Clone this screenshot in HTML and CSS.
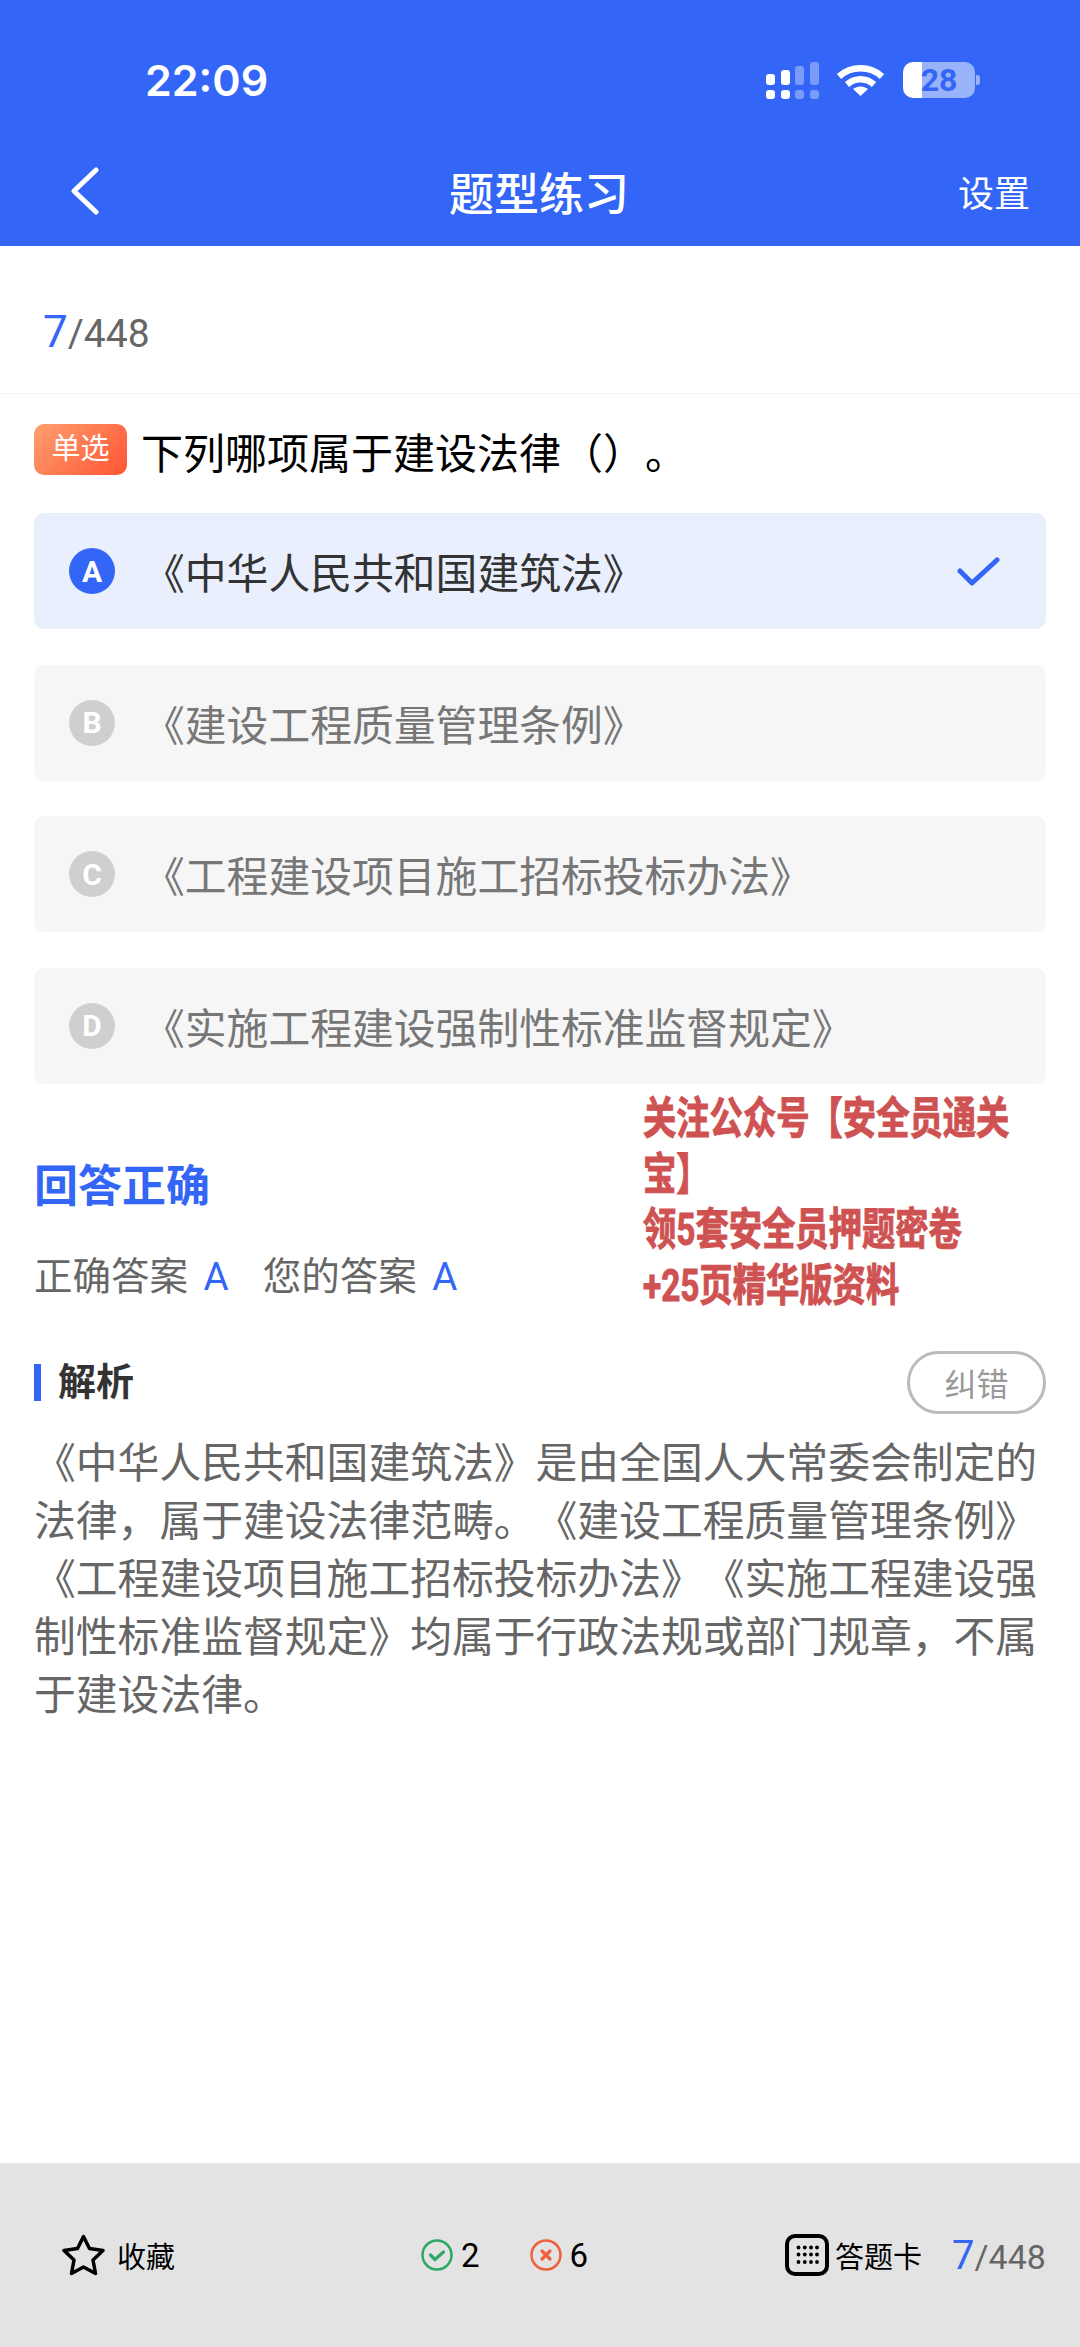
FILE: index.html
```html
<!DOCTYPE html>
<html lang="zh-CN">
<head>
  <meta charset="UTF-8">
  <meta name="viewport" content="width=device-width, initial-scale=1.0">
  <title>题型练习</title>
  <link rel="stylesheet" href="styles.css">
</head>
<body>
  <header class="top">
    <div class="status">
      <span class="time">22:09</span>
      <div class="status-icons">
        <svg class="signal" width="53" height="37" viewBox="0 0 53 37" fill="#fff">
          <rect x="0" y="12" width="9" height="11" rx="3"/>
          <rect x="15" y="8" width="9" height="15" rx="3"/>
          <rect x="0" y="28" width="9" height="9" rx="3"/>
          <rect x="15" y="28" width="9" height="9" rx="3"/>
          <g opacity="0.35">
            <rect x="29" y="4" width="9" height="19" rx="3"/>
            <rect x="44" y="0" width="9" height="23" rx="3"/>
            <rect x="29" y="28" width="9" height="9" rx="3"/>
            <rect x="44" y="28" width="9" height="9" rx="3"/>
          </g>
        </svg>
        <svg class="wifi" width="47" height="31" viewBox="0 0 47 31" fill="none" stroke="#fff" stroke-width="6.5">
          <path d="M2 11.500C14 0.500 33 0.500 45 11.500"/>
          <path d="M10 19.500C18 12.500 29 12.500 37 19.500"/>
          <path d="M16 24C20.500 20.500 26.500 20.500 31 24L23.500 31Z" fill="#fff" stroke="none"/>
        </svg>
        <div class="battery"><span>28</span></div>
        <div class="battery-nub"></div>
      </div>
    </div>
    <nav class="nav">
      <svg class="back" width="30" height="48" viewBox="0 0 30 48" fill="none" stroke="#fff" stroke-width="5" stroke-linecap="round" stroke-linejoin="round">
        <path d="M26 3L4 24L26 45"/>
      </svg>
      <h1>题型练习</h1>
      <span class="setting">设置</span>
    </nav>
  </header>

  <main class="content">
    <div class="counter"><b>7</b><span>/448</span></div>

    <div class="question">
      <span class="tag">单选</span>
      <span class="stem">下列哪项属于建设法律（）。</span>
    </div>

    <ul class="options">
      <li class="option picked">
        <i>A</i><span>《中华人民共和国建筑法》</span>
        <svg class="tick" width="43" height="29" viewBox="0 0 43 29" fill="none" stroke="#3366f6" stroke-width="5" stroke-linecap="round" stroke-linejoin="round">
          <path d="M3 14L15 26L40 3"/>
        </svg>
      </li>
      <li class="option"><i>B</i><span>《建设工程质量管理条例》</span></li>
      <li class="option"><i>C</i><span>《工程建设项目施工招标投标办法》</span></li>
      <li class="option"><i>D</i><span>《实施工程建设强制性标准监督规定》</span></li>
    </ul>

    <h2 class="verdict">回答正确</h2>
    <p class="answers">
      <span>正确答案 <em>A</em></span>
      <span>您的答案 <em>A</em></span>
    </p>

    <div class="analysis-head">
      <h3>解析</h3>
      <button class="report">纠错</button>
    </div>
    <p class="analysis">《中华人民共和国建筑法》是由全国人大常委会制定的法律，属于建设法律范畴。《建设工程质量管理条例》《工程建设项目施工招标投标办法》《实施工程建设强制性标准监督规定》均属于行政法规或部门规章，不属于建设法律。</p>

    <div class="promo">关注公众号【安全员通关<br>宝】<br>领5套安全员押题密卷<br>+25页精华版资料</div>
  </main>

  <footer class="bottom">
    <div class="fav">
      <svg width="43" height="42" viewBox="0 0 43 42" fill="none" stroke="#000" stroke-width="3.500" stroke-linejoin="round">
        <path d="M21.500 2.500L27.500 14.500L41 16.500L31 26L33.500 39.500L21.500 33L9.500 39.500L12 26L2 16.500L15.500 14.500Z"/>
      </svg>
      <span>收藏</span>
    </div>
    <div class="score">
      <svg width="32" height="32" viewBox="0 0 32 32" fill="none" stroke="#2fa866" stroke-width="2.500" stroke-linecap="round" stroke-linejoin="round">
        <circle cx="16" cy="16" r="14.500"/>
        <path d="M9.500 16L14 20.500L22.500 13" stroke-width="3.200"/>
      </svg>
      <span class="num">2</span>
      <svg class="wrong" width="32" height="32" viewBox="0 0 32 32" fill="none" stroke="#f0603c" stroke-width="2.500" stroke-linecap="round">
        <circle cx="16" cy="16" r="14.500"/>
        <path d="M12 12L20 20M20 12L12 20" stroke-width="3.200"/>
      </svg>
      <span class="num">6</span>
    </div>
    <div class="card">
      <svg class="card-icon" width="44" height="42" viewBox="0 0 44 42" fill="none" stroke="#000" stroke-width="4">
        <rect x="2" y="2" width="40" height="38" rx="8"/>
        <g fill="#000" stroke="none">
          <circle cx="13.500" cy="13.500" r="1.900"/><circle cx="19.800" cy="13.500" r="1.900"/><circle cx="26" cy="13.500" r="1.900"/><circle cx="32" cy="13.500" r="1.900"/>
          <circle cx="13.500" cy="20.500" r="1.900"/><circle cx="19.800" cy="20.500" r="1.900"/><circle cx="26" cy="20.500" r="1.900"/><circle cx="32" cy="20.500" r="1.900"/>
          <circle cx="13.500" cy="28" r="1.900"/><circle cx="19.800" cy="28" r="1.900"/><circle cx="26" cy="28" r="1.900"/><circle cx="32" cy="28" r="1.900"/>
        </g>
      </svg>
      <span class="card-label">答题卡</span>
      <div class="counter small"><b>7</b><span>/448</span></div>
    </div>
  </footer>
</body>
</html>
```

FILE: styles.css
```css
* {
  box-sizing: border-box;
}

body {
  margin: 0;
  width: 1080px;
  height: 2347px;
  display: flex;
  flex-direction: column;
  overflow: hidden;
  background: #fff;
  color: #000;
  font-family: Roboto, "Noto Sans CJK SC", sans-serif;
  text-spacing-trim: space-all;
}

.top {
  height: 246px;
  background: #3366f6;
  color: #fff;
}

.status {
  height: 140px;
  padding: 20px 100px 0 145px;
  display: flex;
  justify-content: space-between;
  align-items: center;
}

.time {
  font-family: Inter, Roboto, sans-serif;
  font-size: 43px;
  font-weight: 600;
}

.status-icons {
  display: flex;
  align-items: center;
}

.wifi {
  margin-left: 18px;
}

.battery {
  width: 72px;
  height: 36px;
  margin-left: 19px;
  border-radius: 10px;
  display: flex;
  justify-content: center;
  align-items: center;
  background: linear-gradient(90deg, #fff 27%, rgba(255, 255, 255, 0.5) 27%);
  color: #3366f6;
  font-size: 32px;
  font-weight: 700;
  line-height: 36px;
}

.battery-nub {
  width: 4px;
  height: 10px;
  margin-left: 1px;
  border-radius: 0 3px 3px 0;
  background: rgba(255, 255, 255, 0.5);
}

.nav {
  height: 106px;
  padding: 0 50px 4px 70px;
  display: grid;
  grid-template-columns: 379px auto 1fr;
  align-items: center;
}

.nav h1 {
  margin: 0;
  font-size: 45px;
  font-weight: 500;
}

.setting {
  justify-self: end;
  font-size: 36px;
}

.content {
  flex: 1;
  position: relative;
}

.counter {
  height: 148px;
  padding: 60px 0 0 43px;
  border-bottom: 1px solid #f4f4f4;
  display: flex;
  align-items: baseline;
}

.counter b {
  color: #3366f6;
  font-size: 44px;
  font-weight: 400;
}

.counter span {
  color: #666;
  font-size: 39px;
}

.question {
  height: 81px;
  padding: 30px 34px 0;
  display: flex;
  align-items: flex-start;
  gap: 14px;
  font-size: 42px;
  line-height: 51px;
}

.stem {
  padding-top: 5px;
}

.tag {
  width: 93px;
  height: 51px;
  border-radius: 10px;
  display: flex;
  justify-content: center;
  align-items: center;
  background: linear-gradient(135deg, #ffa06f, #ff5434);
  color: #fff;
  font-size: 29px;
}

.options {
  list-style: none;
  margin: 38px 34px 0;
  padding: 0;
  display: flex;
  flex-direction: column;
  gap: 35.500px;
}

.option {
  height: 116px;
  padding: 0 46px 0 35px;
  border-radius: 10px;
  display: flex;
  align-items: center;
  background: #f6f6f6;
  color: #777;
  font-size: 41.800px;
}

.option i {
  width: 46px;
  height: 46px;
  margin-right: 28px;
  border-radius: 50%;
  display: flex;
  justify-content: center;
  align-items: center;
  background: #cfcfcf;
  color: #fff;
  font-size: 30px;
  font-style: normal;
  font-weight: 700;
}

.option.picked {
  background: #e9effd;
  color: #333;
}

.option.picked i {
  background: #3366f6;
}

.tick {
  margin-left: auto;
}

.verdict {
  margin: 73px 34px 0;
  color: #3366f6;
  font-size: 44px;
  font-weight: 700;
  line-height: 60px;
}

.answers {
  margin: 35px 34px 0;
  display: flex;
  gap: 34px;
  color: #666;
  font-size: 38.500px;
  line-height: 50px;
}

.answers em {
  color: #3366f6;
  font-style: normal;
  margin-left: 6px;
}

.analysis-head {
  height: 63px;
  margin: 49px 34px 0;
  display: flex;
  justify-content: space-between;
  align-items: center;
}

.analysis-head h3 {
  margin: 0;
  padding-left: 17px;
  border-left: 7px solid #3366f6;
  color: #333;
  font-size: 38px;
  font-weight: 700;
  line-height: 37px;
}

.report {
  width: 139px;
  height: 63px;
  padding: 0;
  border: 3px solid #bbb;
  border-radius: 32px;
  background: #fff;
  color: #999;
  font-family: inherit;
  font-size: 32px;
}

.analysis {
  margin: 21px 34px 0;
  color: #666;
  font-size: 41.800px;
  line-height: 58px;
}

/* watermark sits on top of the page, squeezed like the original display face */
.promo {
  position: absolute;
  left: 643px;
  top: 846px;
  transform: scaleX(0.757);
  transform-origin: left top;
  color: #cf5252;
  -webkit-text-stroke: 1px #cf5252;
  font-size: 44px;
  font-weight: 700;
  line-height: 55.700px;
  white-space: nowrap;
}

.bottom {
  height: 184px;
  padding: 0 36px 0 62px;
  display: grid;
  grid-template-columns: 359px 364px 1fr;
  align-items: center;
  background: #e3e3e3;
  font-size: 29px;
}

.fav,
.score,
.card {
  display: flex;
  align-items: center;
}

.fav span {
  margin-left: 12px;
}

.num {
  margin-left: 8px;
  font-size: 33px;
}

.wrong {
  margin-left: 50px;
}

.card-icon {
  flex: none;
}

.card-label {
  margin-left: 6px;
  white-space: nowrap;
}

.counter.small {
  height: auto;
  padding: 0;
  margin-left: 30px;
  border: 0;
}

.counter.small b {
  font-size: 40px;
}

.counter.small span {
  font-size: 34px;
}
```
